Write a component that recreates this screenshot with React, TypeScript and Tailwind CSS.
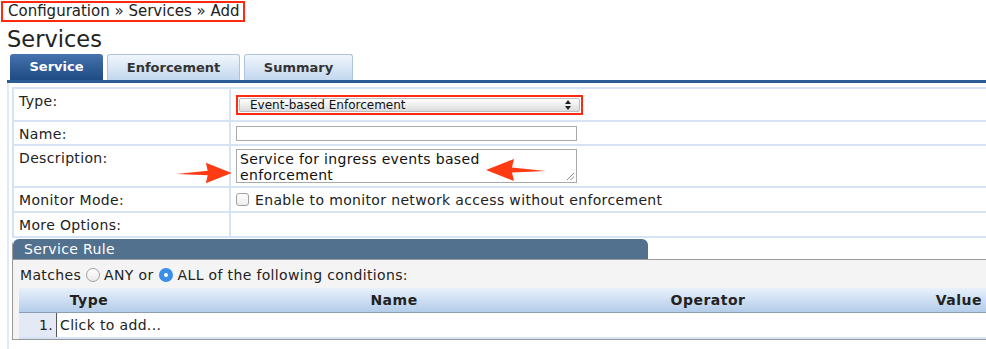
import React from "react";

const font = "font-['DejaVu_Sans',sans-serif]";

const RedArrow = ({ flip, className }: { flip?: boolean; className: string }) => (
    <svg
        className={className}
        viewBox="0 0 60 26"
        style={{ transform: flip ? "scaleX(-1)" : undefined }}
    >
        <path d="M0 14 L34 10.5 L32 2 L60 13 L32 24 L34 15.5 Z" fill="#ff3b14" />
    </svg>
);

const Tab = ({ label, active }: { label: string; active?: boolean }) => (
    <div
        className={
            active
                ? "h-[26px] w-[93px] rounded-t-[3px] bg-gradient-to-b from-[#4673ad] to-[#1f4b85] text-white text-[13px] font-bold flex items-center justify-center"
                : "h-[26px] rounded-t-[3px] border border-b-0 border-[#aec3df] bg-gradient-to-b from-[#f1f6fc] to-[#c3d7ee] text-[#333] text-[13px] font-bold flex items-center justify-center"
        }
    >
        {label}
    </div>
);

const Row = ({
    label,
    height,
    children,
}: {
    label: string;
    height: string;
    children?: React.ReactNode;
}) => (
    <div className={`flex border-b-2 border-[#d6e3f4] ${height}`}>
        <div className="w-[217px] shrink-0 border-r-2 border-[#d6e3f4] pl-[5px] pt-[4px] text-[14px] leading-[16px] tracking-[0.35px] text-[#222]">
            {label}
        </div>
        <div className="flex-1 pl-[5px] flex items-center">{children}</div>
    </div>
);

const App = () => {
    return (
        <div className={`${font} relative w-[986px] h-[349px] overflow-hidden bg-white text-[#222]`}>
            {/* breadcrumb */}
            <div className="flex pl-[1px] pt-[1px]">
                <div className="h-[21px] border-2 border-[#ff2a10] pl-[5px] pr-[4px] text-[15px] leading-[17px] text-[#222]">
                    Configuration » Services » Add
                </div>
            </div>

            <h1 className="ml-[7px] mt-[4px] text-[22.5px] leading-[26px] text-[#222]">Services</h1>

            {/* tabs */}
            <div className="ml-[10px] mt-[2px] flex gap-[4px]">
                <Tab label="Service" active />
                <div className="w-[133px]">
                    <Tab label="Enforcement" />
                </div>
                <div className="w-[109px]">
                    <Tab label="Summary" />
                </div>
            </div>
            <div className="ml-[7px] h-[3px] bg-[#2c5c97]" />

            {/* form */}
            <div className="ml-[7px] border-l-2 border-[#e0e9f6] pl-[3px] pt-[4px] h-[266px]">
                <div className="border-l-2 border-t-2 border-[#d6e3f4]">
                    <Row label="Type:" height="h-[33px]">
                        <div className="h-[20px] w-[347px] border-2 border-[#ff2a10] p-[1px]">
                            <div className="h-full flex items-center justify-between rounded-[2px] border border-[#bdbdbd] bg-gradient-to-b from-white to-[#dcdcdc] pl-[10px] pr-[8px]">
                                <span className="text-[12px] leading-[12px] text-[#111]">Event-based Enforcement</span>
                                <svg width="6" height="10" viewBox="0 0 6 10">
                                    <path d="M3 0 L6 4 L0 4 Z M3 10 L6 6 L0 6 Z" fill="#222" />
                                </svg>
                            </div>
                        </div>
                    </Row>
                    <Row label="Name:" height="h-[24px]">
                        <div className="h-[15px] w-[341px] border border-[#a9a9a9] bg-white" />
                    </Row>
                    <Row label="Description:" height="h-[42px]">
                        <div className="relative h-[34px] w-[341px] border border-[#a9a9a9] bg-white pl-[3px] pt-[1px] text-[14px] leading-[16px] tracking-[0.35px] text-[#111]">
                            Service for ingress events based
                            <br />
                            enforcement
                            <svg className="absolute right-[2px] bottom-[2px]" width="7" height="7" viewBox="0 0 7 7">
                                <path d="M7 0 L0 7 M7 3.5 L3.5 7" stroke="#888" strokeWidth="1" />
                            </svg>
                        </div>
                    </Row>
                    <Row label="Monitor Mode:" height="h-[25px]">
                        <div className="flex items-center gap-[6px] text-[14px] leading-[16px] tracking-[0.35px] text-[#222]">
                            <span className="h-[13px] w-[13px] rounded-[3px] border border-[#a0a0a0] bg-gradient-to-b from-white to-[#ececec]" />
                            Enable to monitor network access without enforcement
                        </div>
                    </Row>
                    <Row label="More Options:" height="h-[25px]" />
                </div>

                {/* service rule */}
                <div className="mt-[1px] rounded-tl-[6px] border-l border-b border-[#9a9a9a] bg-[#f4f4f4] h-[101px]">
                    <div className="border-b border-[#9a9a9a] bg-white">
                        <div className="h-[20px] w-[635px] rounded-t-[6px] bg-[#52718f] pl-[11px] text-[14px] leading-[20px] tracking-[0.35px] text-white">
                            Service Rule
                        </div>
                    </div>
                    <div className="pl-[7px] pt-[7px] flex items-center text-[14px] leading-[16px] tracking-[0.35px] text-[#222]">
                        Matches
                        <span className="ml-[5px] mr-[4px] h-[14px] w-[14px] rounded-full border border-[#a0a0a0] bg-gradient-to-b from-white to-[#eaeaea]" />
                        ANY or
                        <span className="ml-[5px] mr-[5px] h-[14px] w-[14px] rounded-full bg-[#3a8ee6] flex items-center justify-center">
                            <span className="h-[4px] w-[4px] rounded-full bg-white" />
                        </span>
                        ALL of the following conditions:
                    </div>
                    <div className="ml-[6px] mt-[5px]">
                        <div className="h-[25px] flex items-center border-b border-[#8d9db3] bg-gradient-to-b from-[#e9f1fb] to-[#b3cce9] text-[14px] tracking-[0.5px] font-bold text-[#222] whitespace-nowrap">
                            <div className="w-[140px] text-center">Type</div>
                            <div className="w-[470px] text-center">Name</div>
                            <div className="w-[158px] text-center">Operator</div>
                            <div className="flex-1 text-right pr-[4px]">Value</div>
                        </div>
                        <div className="h-[26px] flex border-b-2 border-[#d6e3f4] bg-white text-[14px] tracking-[0.35px] text-[#222]">
                            <div className="w-[38px] flex items-center justify-end pr-[3px] bg-[#e3eaf5] border-r border-[#555]">1.</div>
                            <div className="pl-[3px] flex items-center">Click to add...</div>
                        </div>
                    </div>
                </div>
            </div>

            {/* annotation arrows */}
            <RedArrow className="absolute left-[176px] top-[161px] w-[56px] h-[24px]" />
            <RedArrow flip className="absolute left-[484px] top-[157px] w-[64px] h-[26px]" />
        </div>
    );
};

export default App;
